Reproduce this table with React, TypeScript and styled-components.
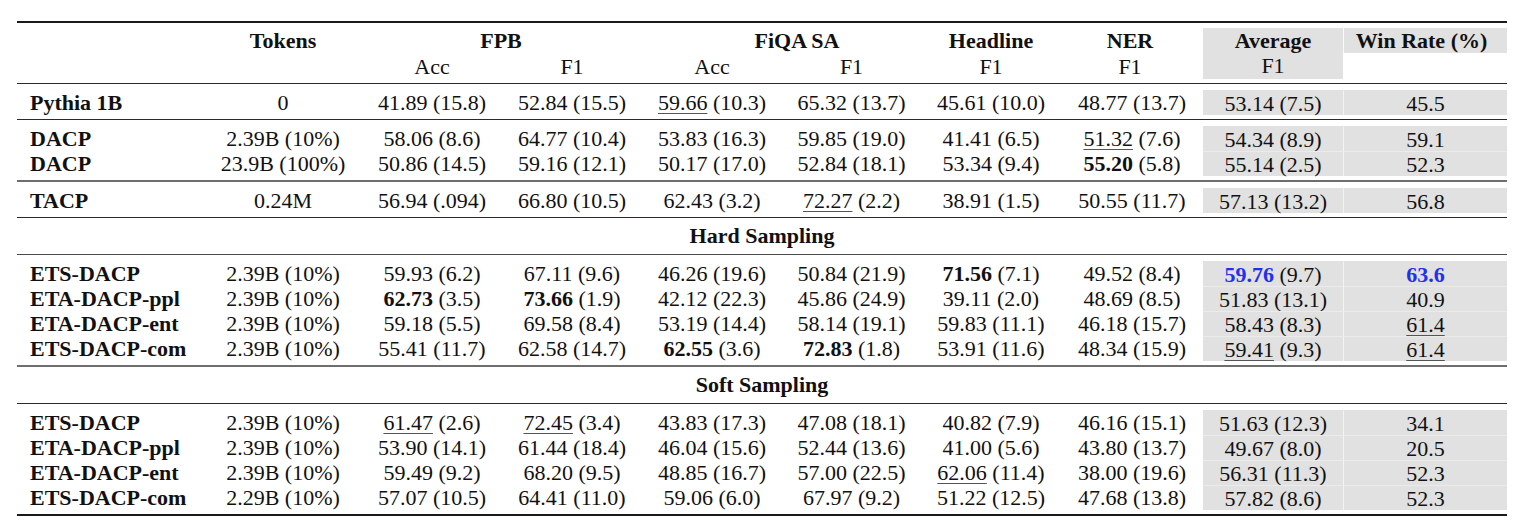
import React from 'react';
import styled, { createGlobalStyle, css } from 'styled-components';

// column widths of the results table (model, tokens, 2x FPB, 2x FiQA, headline, NER, average, win rate)
const COLS = '187px 158px 140px 140px 140px 139px 140px 142px 140px 164px';
const SHADE = '#e1e1e1';

const GlobalStyle = createGlobalStyle`
  body {
    margin: 0;
    background: #ffffff;
    font-family: "Liberation Serif", "Times New Roman", serif;
    color: #111111;
  }
`;

const Page = styled.div`
  padding: 21px 13px 0 17px;
`;

const Table = styled.div`
  width: 1490px;
  display: flex;
  flex-direction: column;
  font-size: 22px;
`;

const Rule = styled.div<{ $size?: number; $color?: string }>`
  height: ${(p) => p.$size ?? 1}px;
  background: ${(p) => p.$color ?? '#2a2a2a'};
`;

const HeaderGrid = styled.div`
  display: grid;
  grid-template-columns: ${COLS};
  grid-template-rows: 25px 26px;
  margin: 5px 0 4px;
`;

const HeadCell = styled.div<{
  $col: number;
  $span?: number;
  $row?: number;
  $rows?: number;
  $bold?: boolean;
  $shade?: boolean;
  $shift?: number;
}>`
  grid-column: ${(p) => p.$col} / span ${(p) => p.$span ?? 1};
  grid-row: ${(p) => p.$row ?? 1} / span ${(p) => p.$rows ?? 1};
  display: flex;
  align-items: center;
  justify-content: center;
  line-height: 25px;
  white-space: nowrap;
  font-weight: ${(p) => (p.$bold ? 700 : 400)};
  background: ${(p) => (p.$shade ? SHADE : 'transparent')};
  padding-left: ${(p) => Math.max(p.$shift ?? 0, 0)}px;
  padding-right: ${(p) => Math.max(-(p.$shift ?? 0), 0)}px;
`;

const AvgStack = styled.div`
  display: flex;
  flex-direction: column;
  align-items: center;
  width: 100%;
  div:first-child {
    height: 25px;
    font-weight: 700;
  }
  div:last-child {
    height: 26px;
  }
`;

const Body = styled.div`
  display: grid;
  grid-template-columns: ${COLS};
  grid-auto-rows: 25px;
  padding: 6px 0 4px;
`;

const Cell = styled.div<{ $name?: boolean; $shade?: boolean; $divider?: boolean; $split?: boolean }>`
  display: flex;
  align-items: center;
  justify-content: center;
  line-height: 25px;
  white-space: nowrap;
  box-sizing: border-box;
  ${(p) =>
    p.$name &&
    css`
      justify-content: flex-start;
      padding-left: 13px;
      font-weight: 700;
    `}
  ${(p) =>
    p.$shade &&
    css`
      background: ${SHADE};
      border-top: 1px solid ${p.$divider ? '#ebebeb' : SHADE};
    `}
  ${(p) =>
    p.$split &&
    css`
      border-left: 1px solid #f3f3f3;
    `}
`;

const SectionTitle = styled.div`
  height: 36px;
  display: flex;
  align-items: center;
  justify-content: center;
  font-weight: 700;
`;

const Mark = styled.span<{ $kind: string }>`
  ${(p) =>
    p.$kind === '*' &&
    css`
      font-weight: 700;
    `}
  ${(p) =>
    p.$kind === '!' &&
    css`
      font-weight: 700;
      color: #2130ee;
    `}
  ${(p) =>
    p.$kind === '_' &&
    css`
      text-decoration: underline;
      text-decoration-thickness: 1px;
      text-underline-offset: 3px;
      text-decoration-color: #555;
    `}
`;

const Spaced = styled.span`
  white-space: pre;
`;

// '*' bold, '_' underlined, '!' blue bold: applies to the score before the (std) part
const Value: React.FC<{ text: string }> = ({ text }) => {
  const kind = text[0];
  if (!'*_!'.includes(kind)) return <>{text}</>;
  const body = text.slice(1);
  const idx = body.indexOf(' ');
  const main = idx < 0 ? body : body.slice(0, idx);
  const rest = idx < 0 ? '' : body.slice(idx);
  return (
    <>
      <Mark $kind={kind}>{main}</Mark>
      {rest && <Spaced>{rest}</Spaced>}
    </>
  );
};

type Row = [string, ...string[]];

const pythia: Row[] = [
  ['Pythia 1B', '0', '41.89 (15.8)', '52.84 (15.5)', '_59.66 (10.3)', '65.32 (13.7)', '45.61 (10.0)', '48.77 (13.7)', '53.14 (7.5)', '45.5'],
];

const dacp: Row[] = [
  ['DACP', '2.39B (10%)', '58.06 (8.6)', '64.77 (10.4)', '53.83 (16.3)', '59.85 (19.0)', '41.41 (6.5)', '_51.32 (7.6)', '54.34 (8.9)', '59.1'],
  ['DACP', '23.9B (100%)', '50.86 (14.5)', '59.16 (12.1)', '50.17 (17.0)', '52.84 (18.1)', '53.34 (9.4)', '*55.20 (5.8)', '55.14 (2.5)', '52.3'],
];

const tacp: Row[] = [
  ['TACP', '0.24M', '56.94 (.094)', '66.80 (10.5)', '62.43 (3.2)', '_72.27 (2.2)', '38.91 (1.5)', '50.55 (11.7)', '57.13 (13.2)', '56.8'],
];

const hard: Row[] = [
  ['ETS-DACP', '2.39B (10%)', '59.93 (6.2)', '67.11 (9.6)', '46.26 (19.6)', '50.84 (21.9)', '*71.56 (7.1)', '49.52 (8.4)', '!59.76 (9.7)', '!63.6'],
  ['ETA-DACP-ppl', '2.39B (10%)', '*62.73 (3.5)', '*73.66 (1.9)', '42.12 (22.3)', '45.86 (24.9)', '39.11 (2.0)', '48.69 (8.5)', '51.83 (13.1)', '40.9'],
  ['ETA-DACP-ent', '2.39B (10%)', '59.18 (5.5)', '69.58 (8.4)', '53.19 (14.4)', '58.14 (19.1)', '59.83 (11.1)', '46.18 (15.7)', '58.43 (8.3)', '_61.4'],
  ['ETS-DACP-com', '2.39B (10%)', '55.41 (11.7)', '62.58 (14.7)', '*62.55 (3.6)', '*72.83 (1.8)', '53.91 (11.6)', '48.34 (15.9)', '_59.41 (9.3)', '_61.4'],
];

const soft: Row[] = [
  ['ETS-DACP', '2.39B (10%)', '_61.47 (2.6)', '_72.45 (3.4)', '43.83 (17.3)', '47.08 (18.1)', '40.82 (7.9)', '46.16 (15.1)', '51.63 (12.3)', '34.1'],
  ['ETA-DACP-ppl', '2.39B (10%)', '53.90 (14.1)', '61.44 (18.4)', '46.04 (15.6)', '52.44 (13.6)', '41.00 (5.6)', '43.80 (13.7)', '49.67 (8.0)', '20.5'],
  ['ETA-DACP-ent', '2.39B (10%)', '59.49 (9.2)', '68.20 (9.5)', '48.85 (16.7)', '57.00 (22.5)', '_62.06 (11.4)', '38.00 (19.6)', '56.31 (11.3)', '52.3'],
  ['ETS-DACP-com', '2.29B (10%)', '57.07 (10.5)', '64.41 (11.0)', '59.06 (6.0)', '67.97 (9.2)', '51.22 (12.5)', '47.68 (13.8)', '57.82 (8.6)', '52.3'],
];

const Group: React.FC<{ rows: Row[] }> = ({ rows }) => (
  <Body>
    {rows.map((row, r) =>
      row.map((text, c) => (
        <Cell
          key={`${r}-${c}`}
          $name={c === 0}
          $shade={c >= 8}
          $divider={c >= 8 && r > 0}
          $split={c === 9}
        >
          {c === 0 ? text : <Value text={text} />}
        </Cell>
      ))
    )}
  </Body>
);

const Header: React.FC = () => (
  <HeaderGrid>
    <HeadCell $col={2} $bold>Tokens</HeadCell>
    <HeadCell $col={3} $span={2} $bold $shift={-2}>FPB</HeadCell>
    <HeadCell $col={5} $span={2} $bold $shift={31}>FiQA SA</HeadCell>
    <HeadCell $col={7} $bold>Headline</HeadCell>
    <HeadCell $col={8} $bold $shift={-4}>NER</HeadCell>
    <HeadCell $col={9} $rows={2} $shade>
      <AvgStack>
        <div>Average</div>
        <div>F1</div>
      </AvgStack>
    </HeadCell>
    <HeadCell $col={10} $bold $shade $shift={-8} style={{ borderLeft: '1px solid #fafafa' }}>
      Win Rate (%)
    </HeadCell>
    <HeadCell $col={3} $row={2}>Acc</HeadCell>
    <HeadCell $col={4} $row={2}>F1</HeadCell>
    <HeadCell $col={5} $row={2}>Acc</HeadCell>
    <HeadCell $col={6} $row={2}>F1</HeadCell>
    <HeadCell $col={7} $row={2}>F1</HeadCell>
    <HeadCell $col={8} $row={2} $shift={-4}>F1</HeadCell>
  </HeaderGrid>
);

export default function App() {
  return (
    <Page>
      <GlobalStyle />
      <Table>
        <Rule $size={2} $color="#1a1a1a" />
        <Header />
        <Rule />
        <Group rows={pythia} />
        <Rule />
        <Group rows={dacp} />
        <Rule $size={2} $color="#6e6e6e" />
        <Group rows={tacp} />
        <Rule />
        <SectionTitle>Hard Sampling</SectionTitle>
        <Rule $color="#4a4a4a" />
        <Group rows={hard} />
        <Rule $size={2} $color="#6e6e6e" />
        <SectionTitle>Soft Sampling</SectionTitle>
        <Rule />
        <Group rows={soft} />
        <Rule $size={2} $color="#1a1a1a" />
      </Table>
    </Page>
  );
}
